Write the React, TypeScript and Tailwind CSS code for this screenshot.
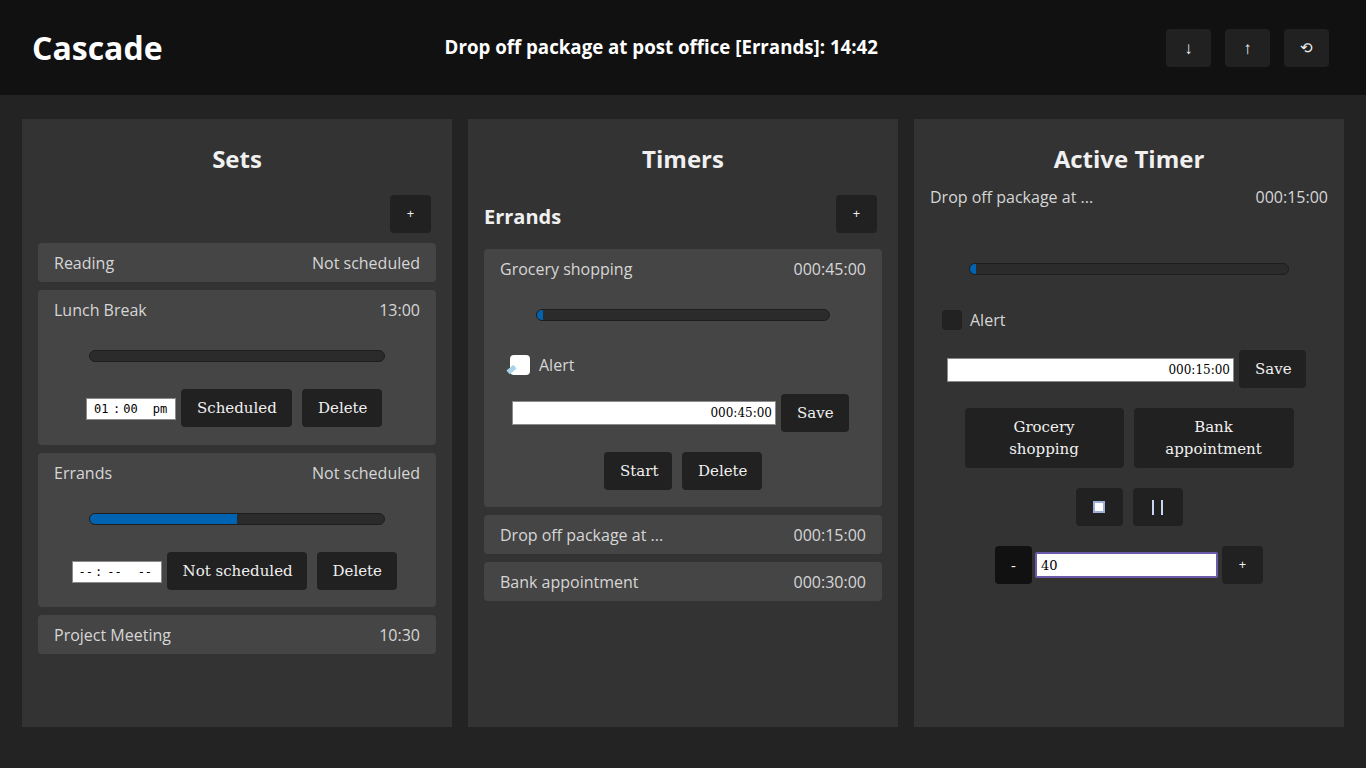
import React from "react";

const sans = { fontFamily: '"Open Sans", "Noto Sans", sans-serif' };

function Btn({ children, className = "" }: { children: React.ReactNode; className?: string }) {
  return (
    <button
      className={
        "bg-[#212121] text-[#f0f0f0] rounded-[4px] h-[38px] px-4 text-[15px] leading-[20px] whitespace-nowrap font-['DejaVu_Serif',serif] " +
        className
      }
    >
      {children}
    </button>
  );
}

function SmallBtn({ children, className = "" }: { children: React.ReactNode; className?: string }) {
  return (
    <button
      className={
        "bg-[#212121] text-[#f0f0f0] rounded-[4px] h-[38px] w-[41px] flex items-center justify-center text-[13px] font-['Open_Sans',sans-serif] " +
        className
      }
    >
      {children}
    </button>
  );
}

function Bar({ pct, className = "" }: { pct: number; className?: string }) {
  return (
    <div className={"h-[12px] rounded-full bg-[#2b2b2b] border border-[#1e1e1e] overflow-hidden " + className}>
      <div className="h-full bg-[#0063b1]" style={{ width: pct + "%" }} />
    </div>
  );
}

function Row({ left, right }: { left: string; right: string }) {
  return (
    <div className="bg-[#454545] rounded-[4px] px-4 h-[39px] flex items-center justify-between text-[16px] text-[#d6d6d6]">
      <span>{left}</span>
      <span>{right}</span>
    </div>
  );
}

function TimeBox({ children, className = "" }: { children: React.ReactNode; className?: string }) {
  return (
    <div
      className={
        "bg-white border border-[#8a8a8a] h-[22px] w-[90px] mt-[1px] flex items-center text-[12px] text-black font-['DejaVu_Sans_Mono',monospace] whitespace-pre overflow-hidden " +
        className
      }
    >
      {children}
    </div>
  );
}

export default function App() {
  return (
    <div className="min-h-[768px] bg-[#232323] text-white" style={sans}>
      <header className="h-[95px] bg-[#111111] flex items-center justify-between pl-8 pr-[37px]">
        <h1 className="text-[32px] font-bold text-white leading-none">Cascade</h1>
        <div className="text-[18.7px] font-bold text-white mr-[6px]">Drop off package at post office [Errands]: 14:42</div>
        <div className="flex gap-[14px]">
          <SmallBtn className="w-[45px] text-[17px]">↓</SmallBtn>
          <SmallBtn className="w-[45px] text-[17px]">↑</SmallBtn>
          <SmallBtn className="w-[45px] text-[15px]">⟲</SmallBtn>
        </div>
      </header>

      <main className="flex gap-4 px-[22px] pt-6">
        {/* Sets */}
        <section className="w-[430px] h-[608px] bg-[#333333] px-4 pt-4">
          <h2 className="text-[24px] leading-8 font-bold text-center text-[#f0f0f0] mt-2">Sets</h2>
          <div className="flex justify-end mt-5 mr-[5px]">
            <SmallBtn>+</SmallBtn>
          </div>
          <div className="flex flex-col gap-2 mt-[10px]">
            <Row left="Reading" right="Not scheduled" />
            <div className="bg-[#454545] rounded-[4px] px-4 pt-2 pb-[18px] text-[16px] text-[#d6d6d6]">
              <div className="flex justify-between h-6 items-center">
                <span>Lunch Break</span>
                <span>13:00</span>
              </div>
              <Bar pct={0} className="mx-[35px] mt-[28px]" />
              <div className="flex items-center justify-center mt-[27px] -ml-[6px]">
                <TimeBox className="pl-[7px]">
                  <span>01</span>
                  <span className="ml-[4.6px]">:</span>
                  <span className="ml-[3px]">00</span>
                  <span className="ml-[15px]">pm</span>
                </TimeBox>
                <Btn className="ml-[5px] w-[111px]">Scheduled</Btn>
                <Btn className="ml-[10px] w-[80px]">Delete</Btn>
              </div>
            </div>
            <div className="bg-[#454545] rounded-[4px] px-4 pt-2 pb-[17px] text-[16px] text-[#d6d6d6]">
              <div className="flex justify-between h-6 items-center">
                <span>Errands</span>
                <span>Not scheduled</span>
              </div>
              <Bar pct={50} className="mx-[35px] mt-[28px]" />
              <div className="flex items-center justify-center mt-[27px] -ml-[6px]">
                <TimeBox className="pl-[6px] text-[#222]">
                  <span>--</span>
                  <span className="ml-[2px]">:</span>
                  <span className="ml-[5px]">--</span>
                  <span className="ml-[16px]">--</span>
                </TimeBox>
                <Btn className="ml-[5px] w-[140px]">Not scheduled</Btn>
                <Btn className="ml-[10px] w-[80px]">Delete</Btn>
              </div>
            </div>
            <Row left="Project Meeting" right="10:30" />
          </div>
        </section>

        {/* Timers */}
        <section className="w-[430px] h-[608px] bg-[#333333] px-4 pt-4">
          <h2 className="text-[24px] leading-8 font-bold text-center text-[#f0f0f0] mt-2">Timers</h2>
          <div className="flex justify-between items-center mt-5 mr-[5px]">
            <h3 className="text-[20px] font-bold text-[#f0f0f0] pt-[6px]">Errands</h3>
            <SmallBtn>+</SmallBtn>
          </div>
          <div className="flex flex-col gap-2 mt-4">
            <div className="bg-[#454545] rounded-[4px] px-4 pt-2 pb-[17px] text-[16px] text-[#d6d6d6]">
              <div className="flex justify-between h-6 items-center">
                <span>Grocery shopping</span>
                <span>000:45:00</span>
              </div>
              <Bar pct={2} className="mx-[36px] mt-[28px]" />
              <div className="flex items-center mt-[34px] ml-[10px] h-5">
                <div className="relative w-5 h-5 bg-white rounded-[4px]">
                  <div className="absolute left-[-3px] bottom-[3px] w-[9px] h-[5px] bg-[#a9d4e8] rotate-[-40deg]" />
                </div>
                <span className="ml-[9px]">Alert</span>
              </div>
              <div className="flex items-center mt-[19px] ml-[12px]">
                <input
                  readOnly
                  value="000:45:00"
                  className="w-[264px] h-[24px] bg-white border border-[#8a8a8a] text-right text-black text-[12px] px-[3px] font-['DejaVu_Serif',serif] outline-none"
                />
                <Btn className="ml-[5px] w-[68px]">Save</Btn>
              </div>
              <div className="flex justify-center mt-5 gap-[10px]">
                <Btn className="w-[68px]">Start</Btn>
                <Btn className="w-[80px]">Delete</Btn>
              </div>
            </div>
            <Row left="Drop off package at ..." right="000:15:00" />
            <Row left="Bank appointment" right="000:30:00" />
          </div>
        </section>

        {/* Active Timer */}
        <section className="w-[430px] h-[608px] bg-[#333333] px-4 pt-4">
          <h2 className="text-[24px] leading-8 font-bold text-center text-[#f0f0f0] mt-2">Active Timer</h2>
          <div className="flex justify-between h-6 items-center mt-[10px] text-[16px] text-[#d6d6d6]">
            <span>Drop off package at ...</span>
            <span>000:15:00</span>
          </div>
          <Bar pct={2} className="mx-[39px] mt-[54px]" />
          <div className="flex items-center mt-[35px] ml-[12px] h-5 text-[16px] text-[#d6d6d6]">
            <div className="w-5 h-5 bg-[#222222] rounded-[4px]" />
            <span className="ml-[8px]">Alert</span>
          </div>
          <div className="flex items-center mt-5 ml-[17px]">
            <input
              readOnly
              value="000:15:00"
              className="w-[287px] h-[24px] mt-[2px] bg-white border border-[#8a8a8a] text-right text-black text-[12px] px-[3px] font-['DejaVu_Serif',serif] outline-none"
            />
            <Btn className="ml-[5px] w-[67px]">Save</Btn>
          </div>
          <div className="flex justify-center gap-[10px] mt-5">
            <Btn className="w-[159px] h-[60px] leading-[22px]">
              Grocery
              <br />
              shopping
            </Btn>
            <Btn className="w-[160px] h-[60px] leading-[22px]">
              Bank
              <br />
              appointment
            </Btn>
          </div>
          <div className="flex justify-center gap-[10px] mt-5">
            <Btn className="w-[47px] px-0 flex items-center justify-center">
              <span className="w-[12px] h-[12px] border-2 border-[#9fb0d8] bg-white block" />
            </Btn>
            <Btn className="w-[50px] px-0 flex items-center justify-center gap-[7px]">
              <span className="w-[2px] h-[15px] bg-[#c9d6f0] block" />
              <span className="w-[2px] h-[15px] bg-[#c9d6f0] block" />
            </Btn>
          </div>
          <div className="flex justify-center items-center mt-5 gap-[3px]">
            <button className="w-[37px] h-[38px] bg-[#111111] rounded-[4px] text-[15px] text-white">-</button>
            <input
              readOnly
              value="40"
              className="w-[183px] h-[26px] bg-white border-2 border-[#6b5ba8] rounded-[2px] text-black text-[13px] px-[4px] font-['DejaVu_Serif',serif] outline-none"
            />
            <SmallBtn className="ml-[1px]">+</SmallBtn>
          </div>
        </section>
      </main>
    </div>
  );
}
